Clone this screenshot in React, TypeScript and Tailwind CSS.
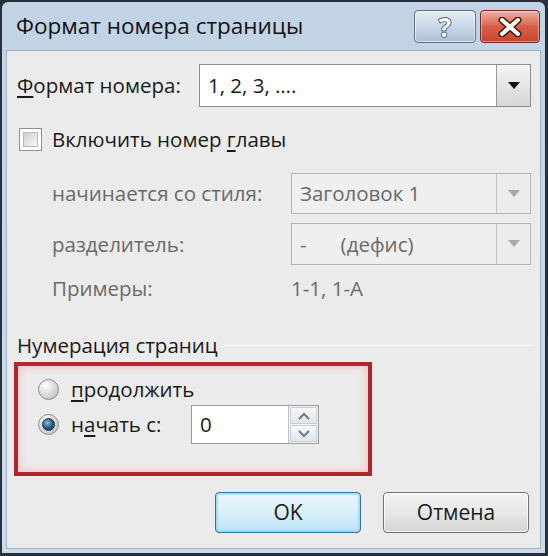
import React from "react";

const FONT = "font-['Open_Sans','Noto_Sans',sans-serif]";

function DropArrow({ disabled }: { disabled?: boolean }) {
  return (
    <svg width="12" height="8" viewBox="0 0 12 8">
      <path d="M0 0 H12 L6 7 Z" fill={disabled ? "#a8a8a8" : "#111"} />
    </svg>
  );
}

function Combo({
  value,
  disabled,
  className,
}: {
  value: React.ReactNode;
  disabled?: boolean;
  className?: string;
}) {
  return (
    <div
      className={[
        "flex border",
        disabled ? "border-[#b4b4b4] bg-[#efefef] text-[#6a6a6a]" : "border-[#8c8c8c] bg-white text-[#1a1a1a]",
        className ?? "",
      ].join(" ")}
    >
      <div className="flex flex-1 items-center pl-[8px]">{value}</div>
      <div
        className={[
          "flex w-[34px] items-center justify-center border-l",
          disabled
            ? "border-[#c4c4c4] bg-[#ececec]"
            : "border-[#9a9a9a] bg-gradient-to-b from-[#f4f4f4] to-[#d6d6d6]",
        ].join(" ")}
      >
        <DropArrow disabled={disabled} />
      </div>
    </div>
  );
}

function Radio({ checked }: { checked?: boolean }) {
  return (
    <div className="flex h-[21px] w-[21px] items-center justify-center rounded-full border border-[#8a8c8e] bg-[radial-gradient(circle_at_35%_30%,#ffffff,#d4d4d4_60%,#b8b8b8)]">
      {checked && (
        <div className="h-[13px] w-[13px] rounded-full border border-[#1d3445] bg-[radial-gradient(circle_at_40%_35%,#8cc0e0,#2a5f86_50%,#142c40)]" />
      )}
    </div>
  );
}

function SpinBtn({ up }: { up?: boolean }) {
  return (
    <div className="flex flex-1 items-center justify-center border border-[#c9ced6] bg-gradient-to-b from-[#f7f8fa] to-[#e1e5ea]">
      <svg width="14" height="8" viewBox="0 0 14 8">
        <path
          d={up ? "M2 7 L7 2 L12 7" : "M2 1 L7 6 L12 1"}
          stroke="#6a7a8c"
          strokeWidth="2"
          fill="none"
        />
      </svg>
    </div>
  );
}

export default function App() {
  return (
    <div className={`h-[556px] w-[548px] bg-[#26313b] pt-[2px] pl-[2px] pr-[3px] pb-[3px] ${FONT}`}>
      <div className="flex h-full flex-col rounded-t-[6px] bg-gradient-to-b from-[#c1d3e4] to-[#cddcea] px-[4px] pb-[4px]">
        {/* title bar */}
        <div className="flex h-[48px] items-center justify-between pl-[10px] pr-[1px]">
          <span className="text-[22.5px] leading-none text-[#111]">Формат номера страницы</span>
          <div className="flex gap-[4px] self-start pt-[8px]">
            <div className="flex h-[33px] w-[62px] items-center justify-center rounded-[4px] border border-[#5c7186] bg-gradient-to-b from-[#e4edf6] via-[#c9d8e7] to-[#a9bfd4] shadow-[inset_0_0_0_1px_rgba(255,255,255,0.6)]">
              <span className="text-[26px] font-bold leading-none text-white [-webkit-text-stroke:1.5px_#2b3c4d] [paint-order:stroke_fill]">
                ?
              </span>
            </div>
            <div className="flex h-[33px] w-[60px] items-center justify-center rounded-[4px] border border-[#6b2a22] bg-gradient-to-b from-[#eab2a4] via-[#d75f48] to-[#c4452f] shadow-[inset_0_0_0_1px_rgba(255,220,210,0.5)]">
              <svg width="26" height="20" viewBox="0 0 26 20">
                <path d="M5 3 L21 17 M21 3 L5 17" stroke="#4a1c16" strokeWidth="7" strokeLinecap="round" />
                <path d="M5 3 L21 17 M21 3 L5 17" stroke="#fff" strokeWidth="4" strokeLinecap="round" />
              </svg>
            </div>
          </div>
        </div>

        {/* client area */}
        <div className="flex flex-1 flex-col border border-[#9fb2c4] bg-[#ebebeb] pl-[10px] pr-[9px] text-[20.5px] text-[#1a1a1a]">
          <div className="mt-[13px] flex h-[43px] items-center">
            <span className="w-[182px]">
              <u className="underline-offset-[3px]">Ф</u>ормат номера:
            </span>
            <Combo value="1, 2, 3, …." className="h-full flex-1" />
          </div>

          <div className="mt-[21px] flex h-[23px] items-center pl-[2px]">
            <div className="flex h-[23px] w-[23px] items-center justify-center border border-[#8e8f8f] bg-white">
              <div className="h-[15px] w-[15px] border border-[#b9b9b9] bg-gradient-to-br from-[#cfcfcf] to-[#f6f6f6]" />
            </div>
            <span className="ml-[10px]">
              Включить номер <u className="underline-offset-[3px]">г</u>лавы
            </span>
          </div>

          <div className="mt-[22px] flex h-[41px] items-center pl-[35px] text-[#6a6a6a]">
            <span className="w-[239px]">начинается со стиля:</span>
            <Combo value="Заголовок 1" disabled className="h-full flex-1" />
          </div>

          <div className="mt-[9px] flex h-[42px] items-center pl-[35px] text-[#6a6a6a]">
            <span className="w-[239px]">разделитель:</span>
            <Combo
              value={
                <span className="flex gap-[34px]">
                  <span>-</span>
                  <span>(дефис)</span>
                </span>
              }
              disabled
              className="h-full flex-1"
            />
          </div>

          <div className="mt-[11px] flex h-[24px] items-center pl-[35px] text-[#6a6a6a]">
            <span className="w-[239px]">Примеры:</span>
            <span>1-1, 1-A</span>
          </div>

          <div className="mt-[33px] flex h-[24px] items-center">
            <span>Нумерация страниц</span>
            <div className="ml-[6px] h-px flex-1 border-b border-white bg-[#c8c8c8]" />
          </div>

          <div className="mt-[5px] ml-[-3px] h-[114px] w-[358px] border-[4px] border-[#b2262f] shadow-[inset_0_0_6px_2px_rgba(255,170,170,0.55)]">
            <div className="mt-[11px] flex h-[24px] items-center pl-[20px]">
              <Radio />
              <span className="ml-[12px]">
                <u className="underline-offset-[3px]">п</u>родолжить
              </span>
            </div>
            <div className="mt-[4px] flex h-[39px] items-center pl-[20px]">
              <Radio checked />
              <span className="ml-[12px] w-[120px]">
                н<u className="underline-offset-[3px]">а</u>чать с:
              </span>
              <div className="flex h-[39px] w-[128px] border border-[#9c9c9c] bg-white">
                <span className="flex flex-1 items-center pl-[8px]">0</span>
                <div className="flex w-[30px] flex-col gap-px border-l border-[#c4c4c4] bg-[#f2f2f2] p-[1px]">
                  <SpinBtn up />
                  <SpinBtn />
                </div>
              </div>
            </div>
          </div>

          <div className="mt-[16px] flex h-[41px] justify-end gap-[22px] pr-[2px]">
            <button className="w-[146px] rounded-[4px] border border-[#3c6f93] bg-gradient-to-b from-[#eaf6fd] via-[#d9effc] to-[#bde3f7] text-[21px] text-[#1a1a1a] shadow-[inset_0_0_0_2px_rgba(140,215,245,0.7)]">
              OK
            </button>
            <button className="w-[146px] rounded-[4px] border border-[#707070] bg-gradient-to-b from-[#f3f3f3] via-[#e8e8e8] to-[#d2d2d2] text-[21px] text-[#1a1a1a] shadow-[inset_0_0_0_1px_rgba(255,255,255,0.8)]">
              Отмена
            </button>
          </div>
        </div>
      </div>
    </div>
  );
}
